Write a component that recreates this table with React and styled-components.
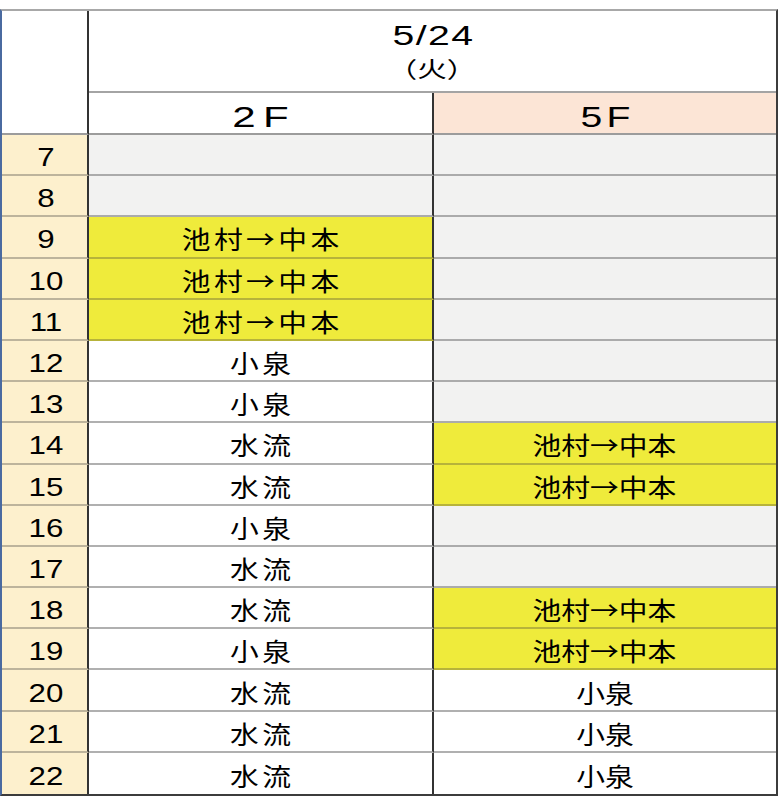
import React from 'react';
import styled, { createGlobalStyle } from 'styled-components';

const GlobalStyle = createGlobalStyle`
  html, body { margin: 0; padding: 0; background: #ffffff; }
  body { font-family: "Liberation Sans", "Noto Sans CJK JP", sans-serif; color: #000; }
  #root { width: 780px; }
`;

const Sheet = styled.div`
  box-sizing: border-box;
  margin-top: 9px;
  width: 778px;
  height: 787px;
  display: grid;
  grid-template-columns: 87px 345px 342px;
  grid-template-rows: 82px 42px repeat(16, 1fr);
  border-top: 2px solid #a8a8a8;
  border-left: 2px solid #4a6aa0;
  border-right: 2px solid #3c3c3c;
  border-bottom: 2px solid #3c3c3c;
`;

const Corner = styled.div`
  box-sizing: border-box;
  grid-row: 1 / span 2;
  background: #ffffff;
  border-right: 2px solid #333333;
  border-bottom: 2px solid #9c9c9c;
`;

const DateHeader = styled.div`
  box-sizing: border-box;
  grid-column: 2 / span 2;
  background: #ffffff;
  border-bottom: 2px solid #a4a4a4;
  display: flex;
  flex-direction: column;
  align-items: center;
  justify-content: center;
  padding-top: 3px;
`;

const Stretch = styled.span`
  display: inline-block;
  white-space: nowrap;
  transform: scaleX(${(p) => p.$sx || 1});
  letter-spacing: ${(p) => p.$ls || 0}px;
  padding-left: ${(p) => p.$ls || 0}px;
`;

const DateText = styled(Stretch)`
  font-family: "Liberation Sans", sans-serif;
  font-size: 27px;
  line-height: 30px;
`;

const DayText = styled(Stretch)`
  font-family: "Noto Sans CJK JP", sans-serif;
  font-size: 22px;
  line-height: 33px;
`;

const FloorHeader = styled.div`
  box-sizing: border-box;
  background: ${(p) => p.$bg};
  border-bottom: 2px solid #9c9c9c;
  border-right: ${(p) => (p.$divider ? '2px solid #333333' : 'none')};
  display: flex;
  justify-content: center;
  align-items: flex-end;
  padding-bottom: 0;
`;

const FloorText = styled(Stretch)`
  font-family: "Liberation Sans", sans-serif;
  font-size: 29px;
  line-height: 32px;
`;

const HourCell = styled.div`
  box-sizing: border-box;
  background: #fdf0cd;
  border-right: 2px solid #333333;
  border-bottom: ${(p) => (p.$last ? 'none' : '2px solid #bdb49c')};
  display: flex;
  align-items: center;
  justify-content: center;
  padding-top: 5px;
  padding-left: 2px;
`;

const HourText = styled(Stretch)`
  font-family: "Liberation Sans", sans-serif;
  font-size: 25px;
  line-height: 28px;
`;

const slotBg = { empty: '#f2f2f1', booked: '#efeb3b', open: '#ffffff' };
const slotLine = { empty: '#ababab', booked: '#b7b33a', open: '#b0b0b0' };

const SlotCell = styled.div`
  box-sizing: border-box;
  background: ${(p) => slotBg[p.$kind]};
  border-right: ${(p) => (p.$divider ? '2px solid #333333' : 'none')};
  border-bottom: ${(p) => (p.$last ? 'none' : `2px solid ${slotLine[p.$kind]}`)};
  display: flex;
  align-items: center;
  justify-content: center;
  padding-top: 3px;
`;

const SlotText = styled(Stretch)`
  font-family: "Noto Sans CJK JP", sans-serif;
  font-size: 25px;
  line-height: 30px;
`;

const SWAP = '池村→中本';
const KOI = '小泉';
const MIZU = '水流';

const rows = [
  { h: 7, a: null, b: null },
  { h: 8, a: null, b: null },
  { h: 9, a: SWAP, b: null },
  { h: 10, a: SWAP, b: null },
  { h: 11, a: SWAP, b: null },
  { h: 12, a: KOI, b: null },
  { h: 13, a: KOI, b: null },
  { h: 14, a: MIZU, b: SWAP },
  { h: 15, a: MIZU, b: SWAP },
  { h: 16, a: KOI, b: null },
  { h: 17, a: MIZU, b: null },
  { h: 18, a: MIZU, b: SWAP },
  { h: 19, a: KOI, b: SWAP },
  { h: 20, a: MIZU, b: KOI },
  { h: 21, a: MIZU, b: KOI },
  { h: 22, a: MIZU, b: KOI },
];

const kindOf = (v) => (v === null ? 'empty' : v === SWAP ? 'booked' : 'open');

export default function App() {
  return (
    <>
      <GlobalStyle />
      <Sheet>
        <Corner />
        <DateHeader>
          <DateText $sx={1.45} $ls={1}>5/24</DateText>
          <DayText $sx={1.35}>（火）</DayText>
        </DateHeader>
        <FloorHeader $bg="#ffffff" $divider>
          <FloorText $sx={1.45} $ls={5}>2F</FloorText>
        </FloorHeader>
        <FloorHeader $bg="#fce5d6">
          <FloorText $sx={1.35} $ls={3}>5F</FloorText>
        </FloorHeader>
        {rows.map((r, i) => {
          const last = i === rows.length - 1;
          return (
            <React.Fragment key={r.h}>
              <HourCell $last={last}>
                <HourText $sx={1.25}>{r.h}</HourText>
              </HourCell>
              <SlotCell $kind={kindOf(r.a)} $divider $last={last}>
                {r.a && <SlotText $sx={1.15} $ls={3}>{r.a}</SlotText>}
              </SlotCell>
              <SlotCell $kind={kindOf(r.b)} $last={last}>
                {r.b && <SlotText $sx={1.15}>{r.b}</SlotText>}
              </SlotCell>
            </React.Fragment>
          );
        })}
      </Sheet>
    </>
  );
}
